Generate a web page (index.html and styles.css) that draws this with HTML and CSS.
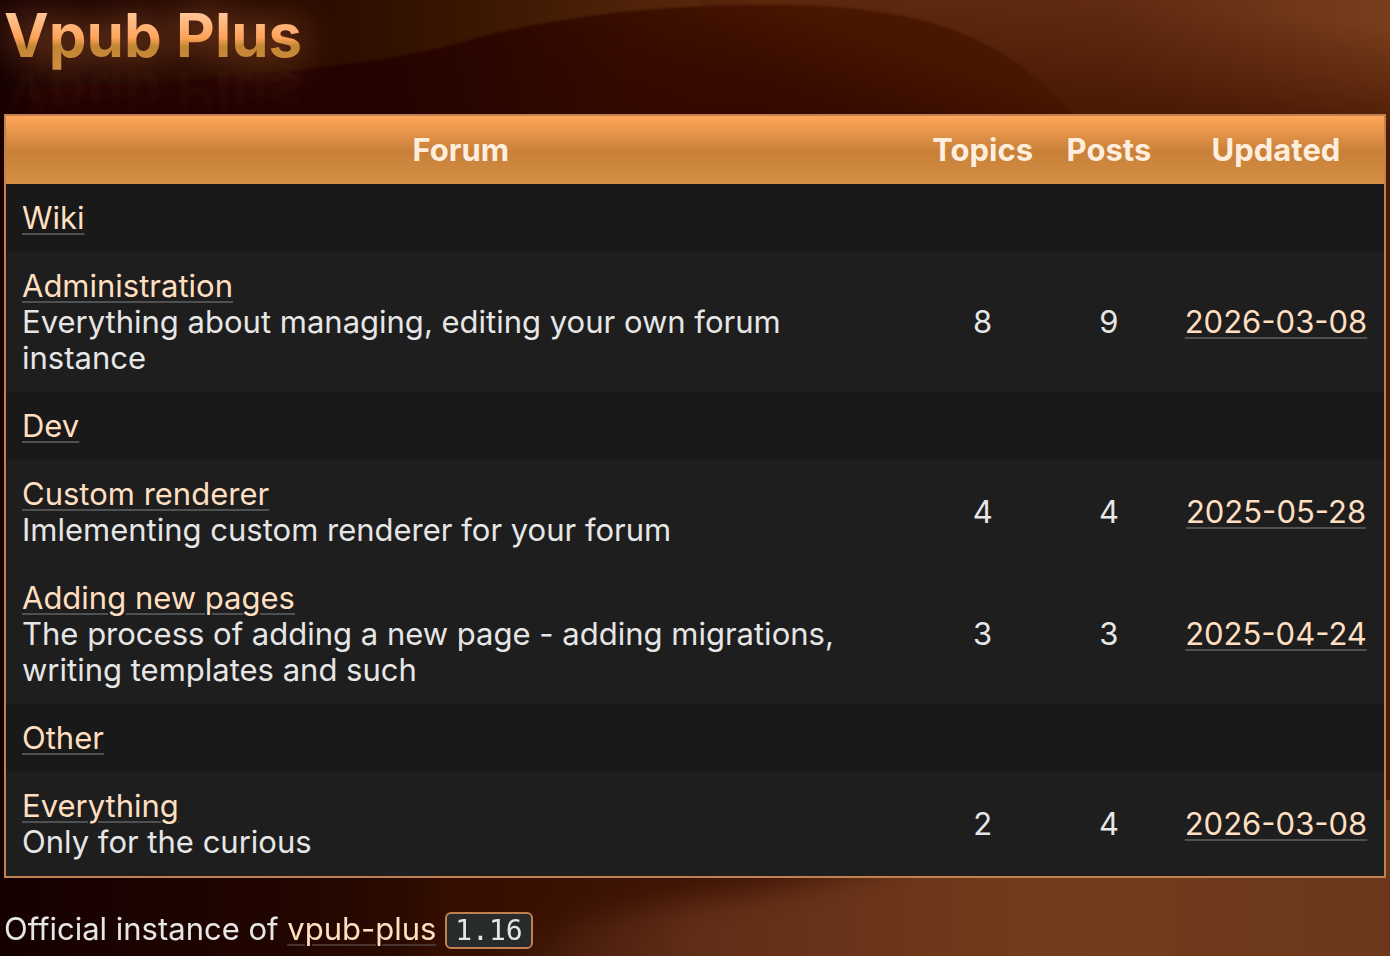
FILE: index.html
```html
<!DOCTYPE html>
<html lang="en">
<head>
<meta charset="utf-8">
<meta name="viewport" content="width=device-width, initial-scale=1">
<title>Vpub Plus</title>
<link rel="stylesheet" href="styles.css">
</head>
<body>
<svg class="backdrop" viewBox="0 0 1390 956" preserveAspectRatio="none" aria-hidden="true">
  <defs>
    <linearGradient id="base" x1="0" y1="0" x2="1" y2="0">
      <stop offset="0" stop-color="#160000"/>
      <stop offset=".2" stop-color="#280a00"/>
      <stop offset=".33" stop-color="#381500"/>
      <stop offset=".55" stop-color="#612c10"/>
      <stop offset=".8" stop-color="#602b12"/>
      <stop offset="1" stop-color="#783d1b"/>
    </linearGradient>
    <linearGradient id="shade" gradientUnits="userSpaceOnUse" x1="1110" y1="0" x2="1100" y2="110">
      <stop offset="0" stop-color="#481803" stop-opacity="0"/>
      <stop offset=".5" stop-color="#481803" stop-opacity=".45"/>
      <stop offset="1" stop-color="#481803" stop-opacity=".95"/>
    </linearGradient>
    <linearGradient id="hill" gradientUnits="userSpaceOnUse" x1="780" y1="0" x2="740" y2="120">
      <stop offset="0" stop-color="#471700"/>
      <stop offset=".5" stop-color="#3b0d00"/>
      <stop offset="1" stop-color="#350600"/>
    </linearGradient>
    <linearGradient id="hillside" gradientUnits="userSpaceOnUse" x1="380" y1="110" x2="740" y2="20">
      <stop offset="0" stop-color="#230200"/>
      <stop offset=".4" stop-color="#2b0800" stop-opacity=".8"/>
      <stop offset="1" stop-color="#401300" stop-opacity="0"/>
    </linearGradient>
    <linearGradient id="floor" x1="0" y1="0" x2="1" y2="0">
      <stop offset="0" stop-color="#150000"/>
      <stop offset=".2" stop-color="#210500"/>
      <stop offset=".34" stop-color="#2f0e00"/>
      <stop offset=".42" stop-color="#4c200e"/>
      <stop offset=".5" stop-color="#602d17"/>
      <stop offset=".75" stop-color="#733c1b"/>
      <stop offset="1" stop-color="#6b381c"/>
    </linearGradient>
    <filter id="soft" x="-20%" y="-50%" width="140%" height="200%" color-interpolation-filters="sRGB"><feGaussianBlur stdDeviation="14"/></filter>
    <filter id="edge" color-interpolation-filters="sRGB"><feGaussianBlur stdDeviation="1"/></filter>
  </defs>
  <rect width="1390" height="956" fill="url(#base)"/>
  <rect x="700" width="690" height="800" fill="url(#shade)"/>
  <g filter="url(#edge)">
    <path d="M0 90C300 75 400 62 480 37C590 10 690 4 785 5C930 7 1010 40 1072 116V600H0Z" fill="url(#hill)"/>
    <path d="M0 90C300 75 400 62 480 37C590 10 690 4 785 5C930 7 1010 40 1072 116V600H0Z" fill="url(#hillside)"/>
  </g>
  <rect width="24" height="956" fill="#160000" filter="url(#soft)"/>
  <rect y="800" width="1390" height="156" fill="url(#floor)"/>
  <path d="M440 820H1000C850 880 760 890 670 904C560 918 500 960 420 980Z" fill="#380f00" opacity=".8" filter="url(#soft)"/>
</svg>
<header>
  <h1 class="title">Vpub Plus</h1>
</header>
<main>
  <table class="forums">
    <thead>
      <tr><th class="wide">Forum</th><th>Topics</th><th>Posts</th><th class="date">Updated</th></tr>
    </thead>
    <tbody>
      <tr class="group"><td colspan="4"><a href="#wiki">Wiki</a></td></tr>
      <tr><td><a href="#administration">Administration</a><p>Everything about managing, editing your own forum instance</p></td><td>8</td><td>9</td><td><a href="#p1">2026-03-08</a></td></tr>
      <tr class="group"><td colspan="4"><a href="#dev">Dev</a></td></tr>
      <tr><td><a href="#renderer">Custom renderer</a><p>Imlementing custom renderer for your forum</p></td><td>4</td><td>4</td><td><a href="#p2">2025-05-28</a></td></tr>
      <tr><td><a href="#pages">Adding new pages</a><p>The process of adding a new page - adding migrations, writing templates and such</p></td><td>3</td><td>3</td><td><a href="#p3">2025-04-24</a></td></tr>
      <tr class="group"><td colspan="4"><a href="#other">Other</a></td></tr>
      <tr><td><a href="#everything">Everything</a><p>Only for the curious</p></td><td>2</td><td>4</td><td><a href="#p4">2026-03-08</a></td></tr>
    </tbody>
  </table>
</main>
<footer>Official instance of <a href="#vpub-plus">vpub-plus</a> <code>1.16</code></footer>
</body>
</html>
```
FILE: styles.css
```css
* { box-sizing: border-box; }
body {
  margin: 0;
  padding: 0 4px;
  background: #160000;
  color: #e6e6e6;
  font: 31px/36px Inter, "Liberation Sans", sans-serif;
}
.backdrop {
  position: fixed;
  inset: 0;
  width: 100%;
  height: 100%;
  z-index: -1;
}
header { padding-bottom: 44px; }
.title {
  margin: 0;
  width: fit-content;
  font-size: 60px;
  line-height: 70px;
  font-weight: 700;
  color: transparent;
  background: linear-gradient(#ffd8b8 0, #ffa35a 54%, #c18634 66%, #d08c40 100%);
  background-clip: text;
  -webkit-background-clip: text;
  filter: drop-shadow(0 0 20px rgba(255, 150, 80, .65));
  -webkit-box-reflect: below -10px linear-gradient(transparent 10%, rgba(0, 0, 0, .05));
}
.forums {
  position: relative;
  width: 100%;
  border: 2px solid #c08050;
  border-spacing: 0;
  background: #1e1e1e;
}
th, td { padding: 16px; text-align: center; }
th { color: #ffeedd; font-weight: 700; }
.wide { width: 66%; }
.date { width: 216px; }
td:first-child { text-align: left; }
thead { background: linear-gradient(#ffa75a, #c88038 52%, #d58f45); }
.group { background: #191919; }
p { margin: 0; }
a {
  color: #ffdfc0;
  text-decoration: underline #505050 2px;
  text-underline-offset: 4px;
}
footer { padding: 33px 0 8px; }
footer a { text-decoration-color: #4a3430; }
code {
  padding: 0 8px;
  border: 2px solid #c08050;
  border-radius: 6px;
  background: #272b2c;
  font: 28px/32px "DejaVu Sans Mono", monospace;
}
```
